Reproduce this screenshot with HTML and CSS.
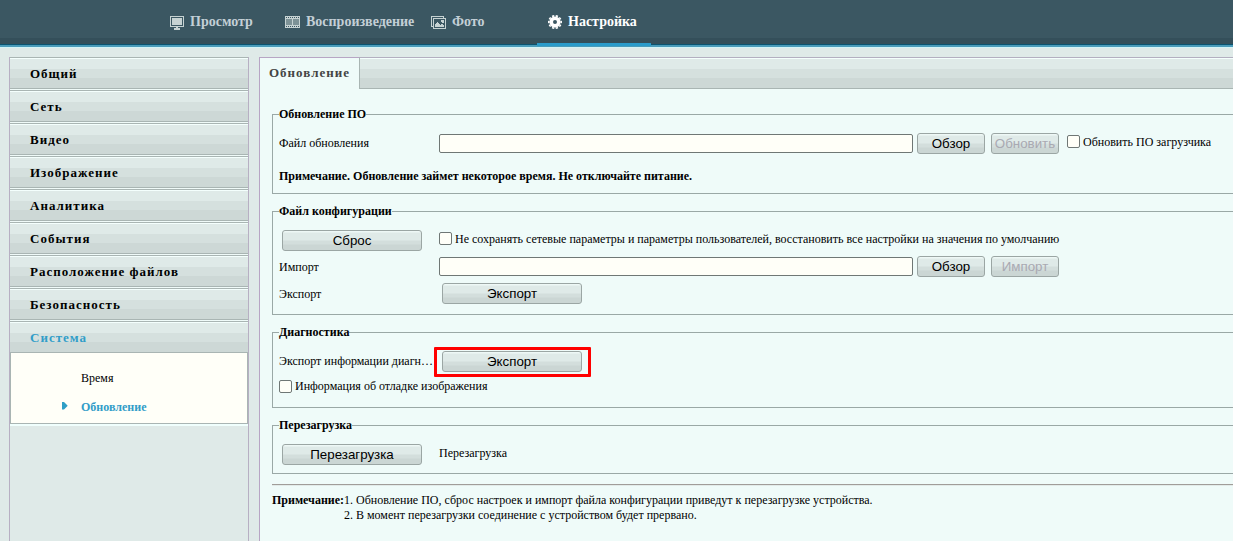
FILE: index.html
```html
<!DOCTYPE html>
<html lang="ru">
<head>
<meta charset="utf-8">
<title>Настройка</title>
<link rel="stylesheet" href="styles.css">
</head>
<body>
<header class="topbar">
  <nav class="topnav">
    <a class="nav-item view">
      <svg width="14" height="14" viewBox="0 0 14 14" shape-rendering="crispEdges"><path fill="#c6d2d2" fill-rule="evenodd" d="M0 0H14V11H0ZM1 1V10H13V1Z"/><path fill="#c6d2d2" d="M2 2H12V9H2ZM6 11H8V12H10V14H4V12H6Z"/></svg>
      <span>Просмотр</span></a>
    <a class="nav-item playback">
      <svg width="15" height="12" viewBox="0 0 15 12" shape-rendering="crispEdges"><path fill="#c6d2d2" d="M0 0H15V12H0Z"/><path fill="#7d9296" d="M1 3H7V9H1ZM8 3H14V9H8Z"/><path fill="none" stroke="#3b5762" stroke-dasharray="1 1" d="M1 1.5H14M1 10.5H14"/></svg>
      <span>Воспроизведение</span></a>
    <a class="nav-item photo">
      <svg width="15" height="13" viewBox="0 0 15 13" shape-rendering="crispEdges"><path fill="none" stroke="#c6d2d2" d="M2 10.500H.5V.5H12.500V2"/><path fill="none" stroke="#c6d2d2" d="M2.500 2.500H14.500V12.500H2.500Z"/><path fill="#c6d2d2" d="M4 11V9L6 6H7L9 9L11 8L13 10V11ZM10 4H12L13 5V6L12 7H11L10 6Z"/></svg>
      <span>Фото</span></a>
    <a class="nav-item setup active">
      <svg width="14" height="14" viewBox="0 0 14 14"><circle cx="7" cy="7" r="3.800" fill="none" stroke="#fff" stroke-width="3.600"/><circle cx="7" cy="7" r="6.200" fill="none" stroke="#fff" stroke-width="1.600" pathLength="20" stroke-dasharray="1.200 .8" stroke-dashoffset=".6"/></svg>
      <span>Настройка</span></a>
  </nav>
</header>
<div class="layout">
  <aside class="sidebar">
    <div class="group">Общий</div>
    <div class="group">Сеть</div>
    <div class="group">Видео</div>
    <div class="group">Изображение</div>
    <div class="group">Аналитика</div>
    <div class="group">События</div>
    <div class="group">Расположение файлов</div>
    <div class="group">Безопасность</div>
    <div class="group open">Система</div>
    <div class="submenu">
      <div class="sub">Время</div>
      <div class="sub current"><svg class="arrow" width="6" height="8" viewBox="0 0 6 8"><path fill="#2f9fc6" d="M0 0H2L5.500 3.500V4L2 7.500H0Z"/></svg>Обновление</div>
    </div>
  </aside>
  <main class="panel">
    <div class="tabs"><div class="tab">Обновление</div><div class="strip"></div></div>
    <div class="content">
      <fieldset class="firmware">
        <legend>Обновление ПО</legend>
        <div class="row tall">
          <span class="label">Файл обновления</span>
          <input class="path" type="text">
          <button class="btn">Обзор</button>
          <button class="btn" disabled>Обновить</button>
          <label class="check"><i class="box"></i>Обновить ПО загрузчика</label>
        </div>
        <div class="notice"><b>Примечание. Обновление займет некоторое время. Не отключайте питание.</b></div>
      </fieldset>
      <fieldset class="config">
        <legend>Файл конфигурации</legend>
        <div class="row reset">
          <span class="label"><button class="btn wide">Сброс</button></span>
          <label class="check"><i class="box"></i><span class="long">Не сохранять сетевые параметры и параметры пользователей, восстановить все настройки на значения по умолчанию</span></label>
        </div>
        <div class="row">
          <span class="label low">Импорт</span>
          <input class="path" type="text">
          <button class="btn">Обзор</button>
          <button class="btn" disabled>Импорт</button>
        </div>
        <div class="row">
          <span class="label low">Экспорт</span>
          <button class="btn wide">Экспорт</button>
        </div>
      </fieldset>
      <fieldset class="diag">
        <legend>Диагностика</legend>
        <div class="row">
          <span class="label">Экспорт информации диагн…</span>
          <span class="marked"><button class="btn wide">Экспорт</button></span>
        </div>
        <div class="row debug"><label class="check"><i class="box"></i>Информация об отладке изображения</label></div>
      </fieldset>
      <fieldset class="reboot">
        <legend>Перезагрузка</legend>
        <div class="row">
          <span class="label"><button class="btn wide">Перезагрузка</button></span>
          <span class="reboot-text">Перезагрузка</span>
        </div>
      </fieldset>
      <div class="rule"></div>
      <div class="footnote">
        <b>Примечание:</b>
        <div><p>1. Обновление ПО, сброс настроек и импорт файла конфигурации приведут к перезагрузке устройства.</p><p>2. В момент перезагрузки соединение с устройством будет прервано.</p></div>
      </div>
    </div>
  </main>
</div>
</body>
</html>
```
FILE: styles.css
```css
* { box-sizing: border-box; }
body {
  margin: 0;
  height: 541px;
  overflow: hidden;
  display: flex;
  flex-direction: column;
  background: #dfeae8;
  color: #000;
  font: 12px/15px "Liberation Serif", serif;
}
.topbar {
  flex: none;
  height: 48px;
  background: linear-gradient(#3b5762 38px, #344f5a 38px 44px, #0b5470 44px 45px, #4b9cba 45px 47px, #d4f4f6 47px);
}
.topnav { display: flex; height: 46px; padding-left: 170px; }
.nav-item {
  display: flex;
  align-items: flex-start;
  padding-top: 14px;
  color: #c3cfd6;
  font-size: 14px;
  font-weight: bold;
  white-space: nowrap;
}
.nav-item svg { flex: none; margin-top: 2px; }
.view { width: 115px; gap: 6px; }
.playback { width: 146px; gap: 6px; }
.photo { width: 106px; gap: 6px; }
.setup { width: 114px; gap: 6px; padding-left: 11px; color: #fff; border-bottom: 3px solid #2a9ccb; }
.nav-item.setup svg { margin-top: 1px; }
.layout { flex: 1; display: flex; gap: 10px; padding: 9px 0 0 9px; min-height: 0; }
.sidebar {
  flex: none;
  width: 240px;
  border: 1px solid #b7afc3;
  border-width: 0 1px;
}
.group {
  height: 32px;
  margin-bottom: 1px;
  padding: 8px 0 0 20px;
  border-top: 1px solid #a9b5b3;
  border-bottom: 1px solid #a9b5b3;
  background: linear-gradient(#f4fffd 1px, #dfeae8 1px 11px, #d5e0de 11px 20px, #cdd8d6 20px);
  box-shadow: 0 1px #f0fbf9;
  font-size: 13px;
  font-weight: bold;
  letter-spacing: 1px;
}
.open { height: 31px; margin: 0; border-bottom: 0; color: #319dc8; box-shadow: none; }
.submenu {
  height: 72px;
  padding: 11px 0 0 50px;
  border: 1px solid #a9b5b3;
  background: #fffff8;
  box-shadow: 0 2px #f0fffd;
}
.sub { display: flex; align-items: center; height: 29px; padding-left: 20px; }
.current { padding-left: 1px; gap: 13px; color: #319dc8; font-weight: bold; }
.arrow { margin-top: -4px; }
.panel {
  flex: 1;
  min-width: 0;
  border-left: 1px solid #b7a5c4;
  background: #effbf9;
}
.tabs { display: flex; height: 32px; }
.tab {
  width: 100px;
  padding: 7px 0 0 9px;
  border-top: 1px solid #b7a5c4;
  border-right: 1px solid #a9b5b3;
  color: #444;
  font-size: 13px;
  font-weight: bold;
  letter-spacing: 1px;
}
.strip {
  flex: 1;
  border-top: 1px solid #b3afc0;
  border-bottom: 1px solid #a9b5b3;
  background: linear-gradient(#f4fffd 1px, #dfeae8 1px 11px, #d5e0de 11px 20px, #cdd8d6 20px);
}
.content { width: 1000px; padding: 18px 0 0 12px; }
fieldset {
  min-width: 0;
  margin: 0 0 10px;
  padding: 0 0 0 6px;
  border: 1px solid #9aa8a6;
}
legend { height: 15px; padding: 0; font-weight: bold; }
.firmware { height: 87px; }
.config { height: 111px; }
.diag { height: 83px; }
.reboot { height: 56px; }
.row { display: flex; align-items: center; height: 27px; white-space: nowrap; }
.row.tall { height: 43px; }
.notice { padding-top: 4px; }
.config .reset { height: 25px; margin-top: 9px; }
.diag legend + .row { margin-top: 8px; }
.row.debug { height: 23px; }
.reboot .row { height: 33px; margin-top: 5px; }
.label { flex: none; width: 160px; }
.low { padding-top: 2px; }
.path {
  width: 474px;
  height: 19px;
  margin: 0 4px 0 0;
  padding: 0 2px;
  border: 1px solid #6f7775;
  border-radius: 2px;
  background: #fffff8;
}
.btn {
  width: 68px;
  height: 21px;
  margin: 0 6px 0 0;
  padding: 0 0 1px;
  border: 1px solid #9ba6a4;
  border-radius: 3px;
  background: linear-gradient(#eef8f6 1px, #dfeae8 2px 9px, #d3dedc 10px 13px, #cbd6d4 14px);
  color: #000;
  font: 13.333px/17px "Liberation Sans", sans-serif;
}
.btn:disabled { color: #a9a9b2; }
.wide { display: block; width: 140px; margin: 0 0 0 3px; }
.check { display: flex; align-items: center; gap: 3px; }
.box { width: 13px; height: 13px; border: 1px solid #6f7775; border-radius: 2px; background: #fffff8; }
.tall .check { margin: 0 0 3px 2px; }
.tall .box { margin-top: -1px; }
.reset .check { margin-bottom: 3px; }
.reset .box { margin-top: -1px; }
.marked { position: relative; }
.marked::after {
  content: "";
  position: absolute;
  inset: -4px -9px -5px -5px;
  border: 3px solid #f00;
  border-radius: 1px;
}
.reboot-text { margin-bottom: 3px; }
.rule { height: 2px; border-top: 1px solid #a09d99; border-bottom: 1px solid #e2ebe9; }
.footnote { display: flex; padding-top: 7px; white-space: nowrap; }
.footnote b { width: 72px; }
.footnote p { margin: 0; }
```
